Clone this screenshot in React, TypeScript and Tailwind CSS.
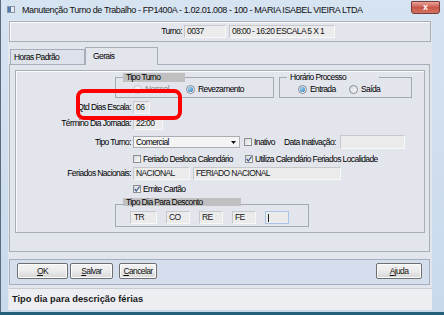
import React from "react";

const Radio = ({ checked, disabled }: { checked?: boolean; disabled?: boolean }) => (
  <span
    className={`w-[9px] h-[9px] rounded-full border flex items-center justify-center shrink-0 ${
      disabled
        ? "border-[#c2c5ca] bg-[#eef0f2]"
        : "border-[#868c95] bg-gradient-to-br from-[#d2d6dc] to-[#fdfdfd]"
    }`}
  >
    {checked && (
      <span className="w-[5px] h-[5px] rounded-full bg-[radial-gradient(circle_at_35%_35%,#9ad8f8,#1d6aab)]" />
    )}
  </span>
);

const Check = ({ checked }: { checked?: boolean }) => (
  <span className="w-[8px] h-[8px] border border-[#8e8f92] bg-gradient-to-br from-[#d8d9dc] to-[#fafafa] flex items-center justify-center shrink-0">
    {checked && (
      <svg width="6" height="6" viewBox="0 0 6 6">
        <path d="M0.6 3 L2.3 5 L5.5 0.6" stroke="#3b5b8e" strokeWidth="1.2" fill="none" />
      </svg>
    )}
  </span>
);

const Field = ({ className, children }: { className: string; children?: React.ReactNode }) => (
  <div
    className={`h-[13px] bg-[#ebebec] border border-t-[#c6c8cc] border-l-[#c6c8cc] border-r-[#f8f8f8] border-b-[#f8f8f8] flex items-center pl-[2px] text-[#151515] whitespace-nowrap overflow-hidden shrink-0 ${className}`}
  >
    {children}
  </div>
);

const Btn = ({ w, u, rest }: { w: string; u: string; rest: string }) => (
  <div
    className={`h-[16px] ${w} rounded-[2px] border border-[#707070] bg-gradient-to-b from-[#f3f3f3] via-[#ebebeb] to-[#d6d6d6] shadow-[inset_0_0_0_1px_#fcfcfc] flex items-center justify-center text-[#111] shrink-0`}
  >
    <span>
      <span className="underline">{u}</span>
      {rest}
    </span>
  </div>
);

const Label = ({ children }: { children: React.ReactNode }) => (
  <div className="w-[115px] text-right shrink-0 mr-[2px] whitespace-nowrap">{children}</div>
);

export default function App() {
  return (
    <div className="relative w-[444px] h-[315px] bg-[#24607a] overflow-hidden font-['Liberation_Sans',sans-serif] text-[8.5px] tracking-[-0.6px] leading-none text-black">
      <div className="h-[312px] w-[444px] flex flex-col bg-gradient-to-b from-[#d6e3f1] to-[#c9d9ec] border-l border-[#5b6b7f]">
        {/* Title bar */}
        <div className="h-[20px] flex items-start shrink-0">
          <div className="mt-[6px] ml-[6px] w-[8px] h-[7px] border border-[#8b96a4] bg-[#e8ebef] flex">
            <div className="w-[3px] h-full bg-[#4f7bb0]" />
          </div>
          <div className="mt-[6px] ml-[7px] flex-1 whitespace-nowrap text-[#111] text-[9px] tracking-[-0.4px]">
            Manutenção Turno de Trabalho - FP1400A - 1.02.01.008 - 100 - MARIA ISABEL VIEIRA LTDA
          </div>
          <div className="mt-[1px] mr-[4px] w-[29px] h-[13px] rounded-b-[3px] rounded-t-[1px] border border-[#7a3b3b] bg-gradient-to-b from-[#e8a49a] via-[#c9574a] to-[#d1735f] flex items-center justify-center text-white text-[9px] font-bold tracking-normal">
            x
          </div>
        </div>

        {/* Client */}
        <div className="flex-1 flex pl-[7px] pr-[12px] pb-[2px]">
          <div className="w-[424px] bg-[#e2e5ec] flex flex-col pl-[1px] pt-[1px]">
            {/* Header panel */}
            <div className="w-[422px] h-[21px] border border-[#a8aeb9] shadow-[inset_1px_1px_0_#fbfbfc] flex items-center pl-[145px] shrink-0">
              <span className="w-[27px] text-right whitespace-nowrap">Turno:</span>
              <Field className="ml-[2px] w-[42px]">0037</Field>
              <Field className="ml-[3px] w-[106px]">08:00 - 16:20 ESCALA 5 X 1</Field>
            </div>

            {/* Tabs */}
            <div className="mt-[5px] h-[17px] flex items-end pl-[1px] shrink-0">
              <div className="w-[75px] h-[15px] border border-b-0 border-[#a8aeb9] bg-[#dde1e9] flex items-center pl-[3px]">
                Horas Padrão
              </div>
              <div className="relative z-10 -mb-[1px] w-[73px] h-[18px] border border-b-0 border-[#a8aeb9] bg-[#e2e5ec] flex items-center pl-[7px]">
                Gerais
              </div>
            </div>

            {/* Tab panel */}
            <div className="w-[421px] h-[188px] border border-[#a8aeb9] pt-[5px] pl-[5px] shrink-0">
              <div className="relative w-[410px] h-[163px] border border-[#a8aeb9] shadow-[inset_1px_1px_0_#fbfbfc] flex flex-col">
                {/* groups row */}
                <div className="mt-[2px] flex shrink-0">
                  <fieldset className="ml-[99px] w-[159px] border border-[#a3a9b2] pb-[3px]">
                    <legend className="ml-[7px] h-[9px] w-[62px] bg-[#c0c0c0] pl-[3px] flex items-center">
                      Tipo Turno
                    </legend>
                    <div className="mt-[3px] h-[9px] flex items-center pl-[17px]">
                      <div className="w-[53px] flex items-center">
                        <Radio disabled />
                        <span className="ml-[3px] text-[#8a8a8a]">Normal</span>
                      </div>
                      <div className="flex items-center">
                        <Radio checked />
                        <span className="ml-[3px]">Revezamento</span>
                      </div>
                    </div>
                  </fieldset>
                  <fieldset className="ml-[5px] w-[133px] border border-[#a3a9b2] pb-[3px]">
                    <legend className="ml-[7px] h-[9px] w-[92px] pl-[3px] flex items-center">
                      Horário Processo
                    </legend>
                    <div className="mt-[3px] h-[9px] flex items-center pl-[18px]">
                      <div className="w-[51px] flex items-center">
                        <Radio checked />
                        <span className="ml-[3px]">Entrada</span>
                      </div>
                      <div className="flex items-center">
                        <Radio />
                        <span className="ml-[3px]">Saída</span>
                      </div>
                    </div>
                  </fieldset>
                </div>

                {/* Qtd Dias Escala */}
                <div className="mt-[3px] h-[13px] flex items-center shrink-0">
                  <Label>Qtd Dias Escala:</Label>
                  <Field className="w-[17px] border-[#f8f8f8]">06</Field>
                </div>

                {/* Término */}
                <div className="mt-[3px] h-[13px] flex items-center shrink-0">
                  <Label>Término Dia Jornada:</Label>
                  <Field className="w-[30px]">22:00</Field>
                </div>

                {/* Tipo Turno */}
                <div className="mt-[5px] h-[14px] flex items-center shrink-0">
                  <Label>Tipo Turno:</Label>
                  <div className="w-[107px] h-[12px] border border-[#a9adb3] bg-[#f4f4f5] flex items-center shrink-0">
                    <span className="flex-1 pl-[2px]">Comercial</span>
                    <div className="w-[11px] h-full flex items-center justify-center">
                      <svg width="5" height="3" viewBox="0 0 5 3">
                        <path d="M0 0 H5 L2.5 3 Z" fill="#111" />
                      </svg>
                    </div>
                  </div>
                  <div className="ml-[4px] w-[40px] flex items-center shrink-0">
                    <Check />
                    <span className="ml-[2px]">Inativo</span>
                  </div>
                  <div className="w-[121px] flex items-center shrink-0">
                    <span className="whitespace-nowrap">Data Inativação:</span>
                    <Field className="ml-auto w-[65px] h-[14px]" />
                  </div>
                </div>

                {/* Feriado desloca */}
                <div className="mt-[5px] h-[10px] flex items-center shrink-0">
                  <div className="w-[117px] shrink-0" />
                  <div className="w-[112px] flex items-center shrink-0">
                    <Check />
                    <span className="ml-[2px] whitespace-nowrap">Feriado Desloca Calendário</span>
                  </div>
                  <Check checked />
                  <span className="ml-[2px] whitespace-nowrap">Utiliza Calendário Feriados Localidade</span>
                </div>

                {/* Feriados Nacionais */}
                <div className="mt-[3px] h-[13px] flex items-center shrink-0">
                  <Label>Feriados Nacionais:</Label>
                  <Field className="w-[57px]">NACIONAL</Field>
                  <Field className="ml-[3px] w-[148px]">FERIADO NACIONAL</Field>
                </div>

                {/* Emite cartão */}
                <div className="mt-[4px] h-[10px] flex items-center shrink-0">
                  <div className="w-[117px] shrink-0" />
                  <Check checked />
                  <span className="ml-[2px]">Emite Cartão</span>
                </div>

                {/* Tipo Dia Para Desconto */}
                <fieldset className="mt-[4px] ml-[99px] w-[194px] border border-[#a3a9b2] pb-[2px] shrink-0">
                  <legend className="ml-[7px] h-[12px] w-[118px]">
                    <div className="h-[8px] bg-[#c0c0c0] pl-[3px] flex items-center">Tipo Dia Para Desconto</div>
                  </legend>
                  <div className="mt-[1px] flex items-center pl-[14px] gap-[9px]">
                    <Field className="w-[27px] pl-[3px]">TR</Field>
                    <Field className="w-[24px]">CO</Field>
                    <Field className="w-[24px]">RE</Field>
                    <Field className="w-[24px]">FE</Field>
                    <div className="h-[13px] w-[24px] bg-[#ebebec] border border-[#a9c4e6] flex items-center pl-[2px]">
                      <div className="w-[1px] h-[8px] bg-[#222]" />
                    </div>
                  </div>
                </fieldset>
              </div>
            </div>

            {/* Button bar */}
            <div className="mt-[7px] w-[421px] h-[26px] border border-[#a6afbf] bg-[#d5deed] flex items-start pt-[3px] pl-[7px] pr-[7px] shrink-0">
              <Btn w="w-[51px]" u="O" rest="K" />
              <div className="ml-[2px]">
                <Btn w="w-[43px]" u="S" rest="alvar" />
              </div>
              <div className="ml-[6px]">
                <Btn w="w-[38px]" u="C" rest="ancelar" />
              </div>
              <div className="ml-auto">
                <Btn w="w-[46px]" u="A" rest="juda" />
              </div>
            </div>

            {/* Status bar */}
            <div className="mt-[3px] flex-1 border-t border-[#c9ccd3] bg-[#eceef2] flex items-center pl-[3px] font-bold text-[9.3px] tracking-normal text-[#1a1a1a]">
              Tipo dia para descrição férias
            </div>
          </div>
        </div>
      </div>

      {/* Annotation highlight */}
      <div className="absolute left-[76px] top-[89px] w-[106px] h-[31px] border-[4px] border-[#ff0000] rounded-[8px] pointer-events-none" />
    </div>
  );
}
